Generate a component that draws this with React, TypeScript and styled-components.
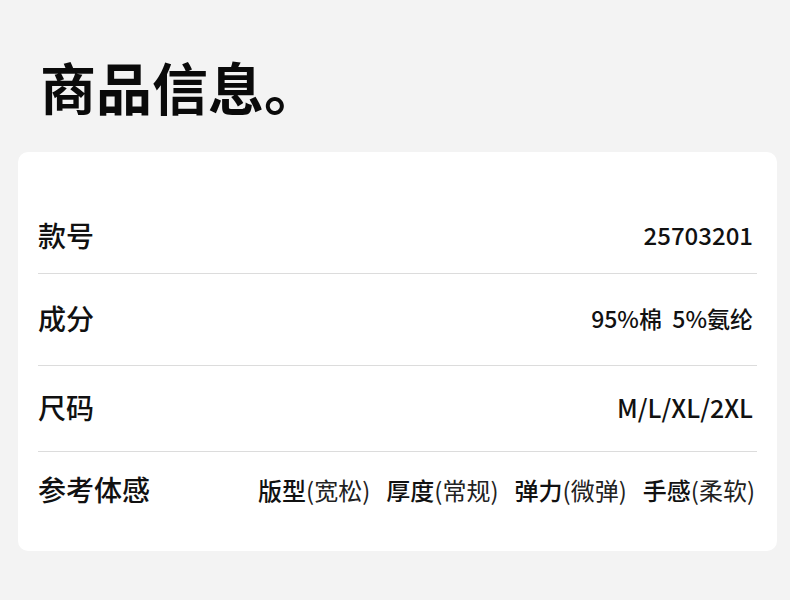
import React from 'react';
import styled, { createGlobalStyle } from 'styled-components';

const GlobalStyle = createGlobalStyle`
	body {
		margin: 0;
		background: #f3f3f3;
		font-family: 'Noto Sans CJK SC', 'Noto Sans', sans-serif;
		color: #111;
	}
`;

type Spec = {
	label: string;
	value?: string;
	size?: number;
	tags?: [string, string][];
	h: number;
};

const specs: Spec[] = [
	{ label: '款号', value: '25703201', size: 24, h: 74 },
	{ label: '成分', value: '95%棉 5%氨纶', size: 23, h: 92 },
	{ label: '尺码', value: 'M/L/XL/2XL', size: 25, h: 86 },
	{
		label: '参考体感',
		tags: [
			['版型', '(宽松)'],
			['厚度', '(常规)'],
			['弹力', '(微弹)'],
			['手感', '(柔软)'],
		],
		h: 78,
	},
];

const App = () => {
	return (
		<Page>
			<GlobalStyle />
			<Title>商品信息。</Title>
			<Card>
				{specs.map((s, i) => (
					<Row key={s.label} h={s.h} last={i === specs.length - 1}>
						<Label>{s.label}</Label>
						{s.value && <Value size={s.size}>{s.value.replace(' ', '\u00a0\u00a0')}</Value>}
						{s.tags && (
							<Tags>
								{s.tags.map(([k, v]) => (
									<Tag key={k}>
										<TagKey>{k}</TagKey>
										<TagVal>{v}</TagVal>
									</Tag>
								))}
							</Tags>
						)}
					</Row>
				))}
			</Card>
		</Page>
	);
};

const Page = styled.main`
	width: 790px;
	height: 600px;
	padding: 0 13px 0 18px;
	box-sizing: border-box;
	display: flex;
	flex-direction: column;
`;

const Title = styled.h1`
	margin: 54px 0 0 22px;
	font-size: 56px;
	line-height: 64px;
	font-weight: 700;
	color: #0a0a0a;
`;

const Card = styled.section`
	margin-top: 34px;
	background: #fff;
	border-radius: 10px;
	padding: 48px 20px 21px;
	display: flex;
	flex-direction: column;
`;

const Row = styled.div<{ h: number; last?: boolean }>`
	height: ${(p) => p.h}px;
	padding-bottom: 4px;
	display: flex;
	align-items: center;
	justify-content: space-between;
	border-bottom: ${(p) => (p.last ? 'none' : '1px solid #dcdcdc')};
	box-sizing: border-box;
`;

const Label = styled.span`
	font-size: 28px;
	font-weight: 500;
	color: #111;
`;

const Value = styled.span<{ size?: number }>`
	margin-right: 4px;
	font-size: ${(p) => p.size ?? 24}px;
	font-weight: 500;
	color: #111;
`;

const Tags = styled.div`
	display: flex;
	gap: 16px;
	margin-right: 2px;
`;

const Tag = styled.span`
	font-size: 24px;
	color: #111;
`;

const TagKey = styled.span`
	font-weight: 500;
`;

const TagVal = styled.span`
	font-weight: 400;
	color: #222;
`;

export default App;
